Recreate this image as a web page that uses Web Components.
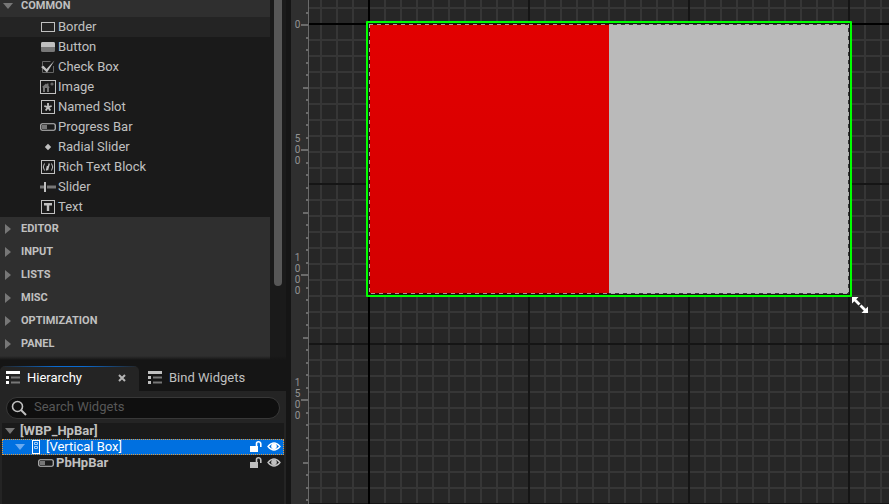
<!DOCTYPE html>
<html lang="en">
<head>
<meta charset="utf-8">
<title>Widget Blueprint Editor</title>
<style>
html,body{margin:0;height:100%;background:#151515;overflow:hidden}
body{font:13px/16px Roboto,"Liberation Sans",sans-serif;color:#c0c0c0}
</style>
</head>
<body>
<widget-editor></widget-editor>
<script>
const define=(name,html,setup)=>customElements.define(name,class extends HTMLElement{
  connectedCallback(){
    if(this.shadowRoot)return;
    this.attachShadow({mode:'open'}).innerHTML=typeof html==='function'?html(this):html;
    if(setup)setup(this,this.shadowRoot);
  }
});
const reset='button{font:inherit;color:inherit;background:none;border:0;padding:0;margin:0;text-align:left;outline:0}';
const bar='<rect x=".75" y="4.75" width="14.5" height="6.5" rx="1.5" fill="none" stroke="currentColor" stroke-width="1.2"/><rect x="2" y="6" width="5" height="4" fill="#777"/>';
const frame='<rect x="1.5" y="1.5" width="13" height="13" fill="none" stroke="currentColor"/>';
const icons={
  border:'<rect x="1.5" y="3.5" width="13" height="9" fill="none" stroke="currentColor"/>',
  button:'<rect x="1" y="3" width="14" height="10" rx="1.5" fill="#777"/><path d="M1 8V4.500Q1 3 2.500 3H13.500Q15 3 15 4.500V8Z" fill="currentColor"/>',
  check:'<path d="M10.500 2.500H2.500V13.500H13.500V7" fill="none" stroke="#666"/><path d="M1 8L3.500 6.800 6.500 10 14.500 1.500 7 13.500Z" fill="currentColor"/>',
  image:'<rect x=".5" y="1.500" width="15" height="13" fill="none" stroke="currentColor"/><path d="M2 8L6 4.500 7 5.500V4.500H8.500V7L10 8.500H9V13H7V9H5V13H3V8.500Z" fill="#777"/><circle cx="12" cy="5" r="1.600" fill="#666"/>',
  slot:frame+'<path d="M8 4V8M4.300 7L8 8.200 11.700 7M5.700 11.500L8 8.200 10.300 11.500" fill="none" stroke="currentColor" stroke-width="1.800"/>',
  progress:bar,
  radial:'<path d="M8 4.800L11.200 8 8 11.200 4.800 8Z" fill="currentColor"/>',
  rich:frame+'<path d="M4.500 4.500Q2 8 4.500 11.500M11.500 4.500Q14 8 11.500 11.500" fill="none" stroke="currentColor"/><path d="M9.300 4.500L8.300 8M7.500 7L6.500 11.500M8.300 8L7.500 11" stroke="currentColor" stroke-width="1.400"/>',
  slider:'<path d="M0 8H4M7 8H16" stroke="#777" stroke-width="3"/><path d="M5 3V13" stroke="currentColor" stroke-width="2"/>',
  text:frame+'<path d="M4 4H12V6.500H9.200V12H6.800V6.500H4Z" fill="currentColor"/>',
  vbox:'<rect x="4.500" y="1.500" width="7" height="13" fill="none" stroke="currentColor"/><path d="M6.500 3.500H9.500V5.500H6.500ZM6.500 7.500H9.500V9.500H6.500Z" fill="none" stroke="#a6cdf7"/>',
  tree:'<path d="M1 1H15V4H1ZM1 6H4V9H1ZM1 11H4V14H1Z" fill="currentColor"/><path d="M6 7.500H15M6 12.500H15" stroke="#777" stroke-width="2"/>',
  search:'<circle cx="6.500" cy="6.500" r="5" fill="none" stroke="currentColor" stroke-width="1.600"/><path d="M10 10L15 15" stroke="currentColor" stroke-width="2"/>',
  close:'<path d="M5 5L11 11M11 5L5 11" stroke="currentColor" stroke-width="2"/>',
  lock:'<path d="M2 7H10V13H2Z" fill="currentColor"/><path d="M8.500 7V4.500Q8.500 2.800 10.500 2.800T12.800 4.800V8" fill="none" stroke="currentColor" stroke-width="1.600"/>',
  eye:'<path d="M2 7.500Q8 .5 14 7.500 8 14.500 2 7.500Z" fill="none" stroke="currentColor" stroke-width="1.300"/><circle cx="8" cy="7.300" r="2.800" fill="currentColor"/>',
  down:'<path d="M3 5H13L8 11Z" fill="#777"/>',
  right:'<path d="M5 3L11 8 5 13Z" fill="#777"/>',
  downlit:'<path d="M3 5H13L8 11Z" fill="#69aaf0"/>'
};
define('ui-icon',el=>`<style>:host{display:block;flex:none;width:16px;height:16px}svg{display:block}</style><svg width="16" height="16" viewBox="0 0 16 16" aria-hidden="true">${icons[el.getAttribute('name')]||''}</svg>`);

define('palette-item',el=>`<style>${reset}:host{display:block;background:#1a1a1a}:host([hovered]){background:#242424}
button{display:flex;align-items:center;gap:2px;width:100%;height:20px;padding-left:40px}</style>
<button type="button"><ui-icon name="${el.getAttribute('icon')}"></ui-icon><span><slot></slot></span></button>`);

define('palette-category',el=>`<style>${reset}:host{display:block}
button{display:flex;align-items:center;gap:5px;width:100%;height:23px;background:#2f2f2f;font-size:11px;line-height:11px;font-weight:700}</style>
<button type="button" aria-expanded="${el.hasAttribute('open')}"><ui-icon name="${el.hasAttribute('open')?'down':'right'}"></ui-icon><span><slot name="title"></slot></span></button><slot></slot>`);

define('widget-palette',`<style>:host{display:flex;height:360px;flex:none;overflow:hidden;position:relative;background:#1a1a1a}
.list{flex:1;margin-top:-6px;background:#2f2f2f}
.track{width:16px;display:flex;justify-content:center}
.thumb{width:8px;height:286px;background:#575757;border-radius:0 0 4px 4px}
:host::after{content:"";position:absolute;left:0;right:0;bottom:0;height:4px;background:linear-gradient(transparent,#151515)}</style>
<div class="list">
<palette-category open><span slot="title">COMMON</span>
<palette-item icon="border" hovered>Border</palette-item><palette-item icon="button">Button</palette-item>
<palette-item icon="check">Check Box</palette-item><palette-item icon="image">Image</palette-item>
<palette-item icon="slot">Named Slot</palette-item><palette-item icon="progress">Progress Bar</palette-item>
<palette-item icon="radial">Radial Slider</palette-item><palette-item icon="rich">Rich Text Block</palette-item>
<palette-item icon="slider">Slider</palette-item><palette-item icon="text">Text</palette-item></palette-category>
<palette-category><span slot="title">EDITOR</span></palette-category>
<palette-category><span slot="title">INPUT</span></palette-category>
<palette-category><span slot="title">LISTS</span></palette-category>
<palette-category><span slot="title">MISC</span></palette-category>
<palette-category><span slot="title">OPTIMIZATION</span></palette-category>
<palette-category><span slot="title">PANEL</span></palette-category>
</div><div class="track"><div class="thumb"></div></div>`);

define('panel-tab',el=>`<style>${reset}:host{display:flex;align-items:center;height:25px;padding-left:6px;border-radius:5px 5px 0 0}
:host([active]){flex:0 0 133px;background:linear-gradient(90deg,#242424,#0a6ad0 40%,#0a6ad0 60%,#242424) top/100% 1px no-repeat #242424;color:#fff}
.tab{display:flex;align-items:center;gap:6px;flex:1;height:25px;padding-bottom:2px}ui-icon{margin-left:-1px}
.close{margin-right:9px;color:#b5b5b5;padding-bottom:1px}</style>
<button class="tab" type="button" role="tab" aria-selected="${el.hasAttribute('active')}"><ui-icon name="tree"></ui-icon><span><slot></slot></span></button>
${el.hasAttribute('active')?'<button class="close" type="button" aria-label="Close tab"><ui-icon name="close"></ui-icon></button>':''}`);

define('search-field',`<style>:host{display:block;padding:6px 6px 4px}
label{display:flex;align-items:center;gap:7px;box-sizing:border-box;height:22px;padding-left:4px;border:1px solid #383838;border-radius:11px;background:#0f0f0f;color:#c0c0c0}
input{flex:1;min-width:0;font:inherit;color:#c0c0c0;background:none;border:0;padding:0 0 2px;outline:0;height:16px}
input::placeholder{color:#575757;opacity:1}</style>
<label><ui-icon name="search"></ui-icon><input type="text" aria-label="Search Widgets" placeholder="Search Widgets"></label>`);

define('tree-row',el=>`<style>${reset}:host{display:flex;align-items:center;box-sizing:border-box;height:16px;padding-left:calc(var(--depth,0)*10px);font-weight:700}
:host([selected]){background:#0070e0;color:#fff;outline:1px dotted #e39a3a;outline-offset:-1px;font-weight:400}
.name{display:flex;align-items:center;gap:2px;flex:1;min-width:0}:host(:not([icon])) .name{padding-left:2px}.tools{display:flex;gap:2px;padding-right:2px}</style>
${el.hasAttribute('open')?`<button type="button" aria-label="Collapse"><ui-icon name="${el.hasAttribute('selected')?'downlit':'down'}"></ui-icon></button>`:'<ui-icon name="blank"></ui-icon>'}
<div class="name">${el.hasAttribute('icon')?`<ui-icon name="${el.getAttribute('icon')}"></ui-icon>`:''}<span><slot></slot></span></div>
${el.hasAttribute('icon')?'<div class="tools"><button type="button" aria-label="Lock"><ui-icon name="lock"></ui-icon></button><button type="button" aria-label="Visibility"><ui-icon name="eye"></ui-icon></button></div>':''}`);

define('hierarchy-panel',`<style>:host{display:flex;flex-direction:column;flex:1;min-height:0;padding-top:6px}
.tabs{display:flex;gap:3px}.body{flex:1;display:flex;flex-direction:column;background:#242424;min-height:0}
.tree{flex:1;margin:0 2px;background:#1a1a1a}</style>
<div class="tabs" role="tablist"><panel-tab active>Hierarchy</panel-tab><panel-tab>Bind Widgets</panel-tab></div>
<div class="body"><search-field></search-field><div class="tree">
<tree-row open>[WBP_HpBar]</tree-row>
<tree-row open selected icon="vbox" style="--depth:1">[Vertical Box]</tree-row>
<tree-row icon="progress" style="--depth:2">PbHpBar</tree-row></div></div>`);

define('canvas-ruler',`<style>:host{display:block;position:relative;width:18px;flex:none;background:#2f2f2f;overflow:hidden}
svg{display:block}.n{position:absolute;left:3px;width:7px;font-size:10px;line-height:11px;color:#939393;text-align:center}</style>
<svg width="18" height="1200" aria-hidden="true"></svg>`,(el,root)=>{
  let d='';
  for(let i=-1;i<94;i++){
    const y=24+Math.round(i*12.5),w=i%10===0?7:i%5===0?5:2;
    d+=`<rect x="${17-w}" y="${y}" width="${w}" height="2"/>`;
  }
  root.querySelector('svg').innerHTML=`<g fill="#6b6b6b"><rect x="17" width="1" height="1200"/>${d}</g>`;
  [0,500,1000,1500].forEach((v,i)=>{
    const n=document.createElement('div');n.className='n';
    String(v).split('').forEach(c=>{const s=document.createElement('div');s.textContent=c;n.append(s)});
    n.style.top=(19+i*125-(i?(String(v).length-1)*11-(i>1?16:11):0))+'px';
    root.append(n);
  });
});

define('progress-preview',`<style>:host{display:block;box-sizing:border-box;border:2px solid #0f0;border-radius:1px;background:#151515;padding:1px}
.fill{position:relative;height:100%;background:linear-gradient(#e20000,#d40000) left/50% 100% no-repeat #bababa}
svg{position:absolute;inset:0}</style>
<div class="fill" role="progressbar" aria-label="PbHpBar" aria-valuenow="50" aria-valuemin="0" aria-valuemax="100">
<svg width="100%" height="100%" aria-hidden="true"><rect width="100%" height="100%" fill="none" stroke="#000" stroke-opacity=".7" stroke-width="2"/><rect width="100%" height="100%" fill="none" stroke="#fff" stroke-opacity=".6" stroke-width="2" stroke-dasharray="4 4"/></svg></div>`);

define('design-canvas',`<style>:host{display:block;position:relative;flex:1;min-width:0;overflow:hidden;
background:
linear-gradient(#000,#000) 59px 0/2px 100% no-repeat,
linear-gradient(#000,#000) 0 23px/100% 2px no-repeat,
repeating-linear-gradient(90deg,#151515 0 2px,transparent 2px 160px) 59px 0/160px 100%,
repeating-linear-gradient(#151515 0 2px,transparent 2px 160px) 0 23px/100% 160px,
linear-gradient(90deg,#363636 2px,transparent 2px) 59px 0/16px 16px,
linear-gradient(#363636 2px,transparent 2px) 0 23px/16px 16px,#262626}
progress-preview{position:absolute;left:57px;top:21px;width:486px;height:276px}
.cursor{position:absolute;left:542px;top:296px}</style>
<progress-preview></progress-preview>
<svg class="cursor" width="18" height="18" viewBox="0 0 18 18" aria-hidden="true"><path d="M3.500 3.500L8.500 8.500M9.500 9.500L14.500 14.500" stroke="#fff" stroke-width="2.800"/><path d="M1 1H7.500L1 7.500ZM17 17H10.500L17 10.500Z" fill="#fff"/></svg>`);

define('widget-editor',`<style>:host{display:flex;height:100vh}
aside{display:flex;flex-direction:column;flex:0 0 286px;min-width:0;margin-right:5px}
main{display:flex;flex:1;min-width:0}</style>
<aside><widget-palette></widget-palette><hierarchy-panel></hierarchy-panel></aside>
<main><canvas-ruler></canvas-ruler><design-canvas></design-canvas></main>`);
</script>
</body>
</html>
